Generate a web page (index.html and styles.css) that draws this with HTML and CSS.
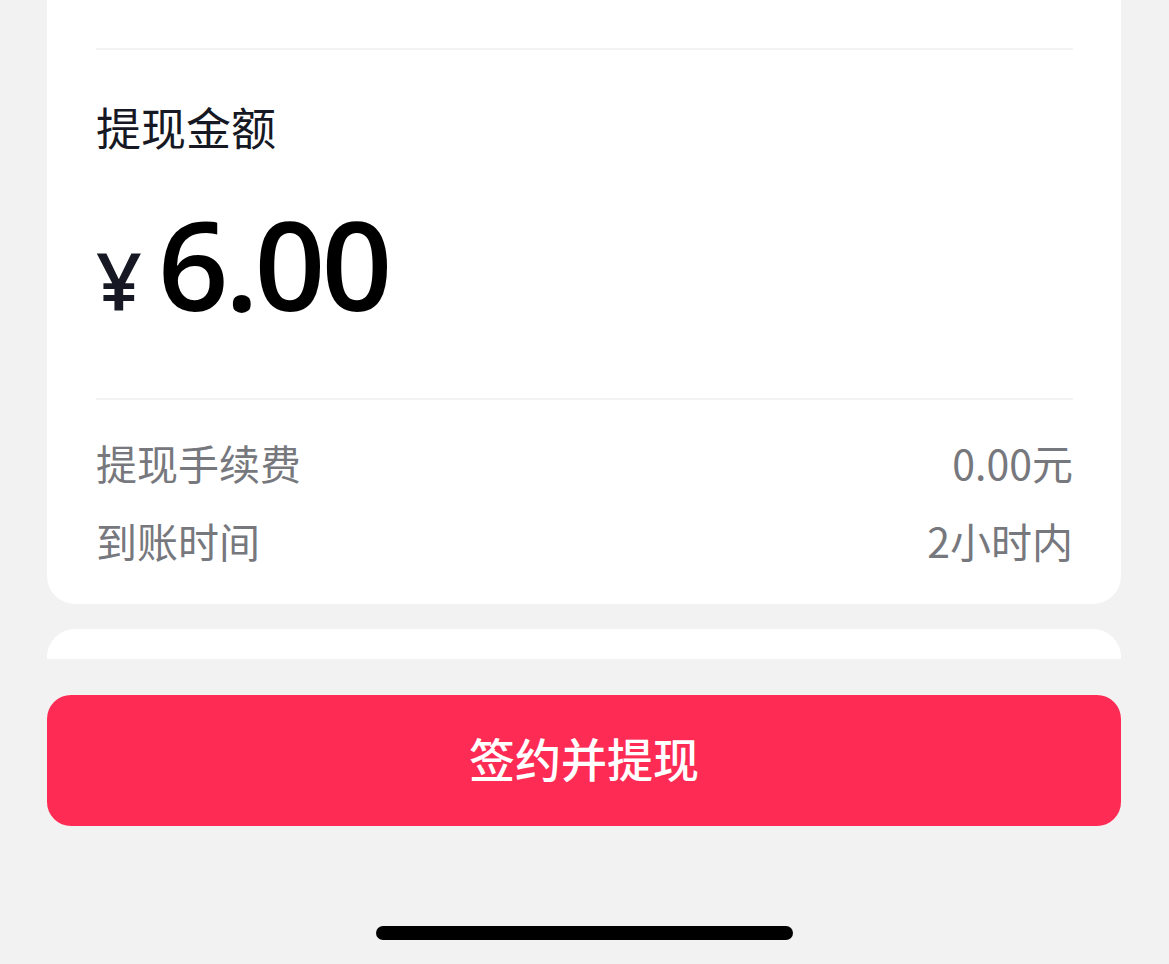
FILE: index.html
```html
<!DOCTYPE html>
<html lang="zh-CN">
<head>
<meta charset="utf-8">
<title>提现</title>
<link rel="stylesheet" href="styles.css">
</head>
<body>
<div class="page">
  <div class="scroll">
    <section class="card card-main">
      <div class="divider"></div>
      <div class="label">提现金额</div>
      <div class="amount">
        <span class="currency">¥</span><span class="value">6.00</span>
      </div>
      <div class="divider"></div>
      <div class="rows">
        <div class="row"><span>提现手续费</span><span>0.00元</span></div>
        <div class="row"><span>到账时间</span><span>2小时内</span></div>
      </div>
    </section>
    <section class="card card-next"></section>
  </div>
  <footer class="footer">
    <button class="btn" type="button">签约并提现</button>
    <div class="home-indicator"></div>
  </footer>
</div>
</body>
</html>
```

FILE: styles.css
```css
html, body {
  margin: 0;
  padding: 0;
  background: #f2f2f2;
}
body {
  font-family: "Noto Sans CJK SC", "Noto Sans", sans-serif;
  color: #161823;
}
.page {
  width: 1169px;
  height: 964px;
  display: flex;
  flex-direction: column;
  overflow: hidden;
}
.scroll {
  height: 659px;
  overflow: hidden;
  padding: 0 48px 0 47px;
  display: flex;
  flex-direction: column;
  gap: 25px;
  flex-shrink: 0;
}
.card {
  background: #ffffff;
  border-radius: 28px;
}
.card-main {
  border-radius: 0 0 28px 28px;
  padding: 48px 48px 22px 49px;
}
.divider {
  height: 2px;
  background: #f2f2f2;
}
.label {
  margin-top: 47px;
  font-size: 45px;
  line-height: 60px;
  color: #161823;
}
.amount {
  margin-top: 38px;
  margin-bottom: 67px;
  display: flex;
  align-items: baseline;
  gap: 16px;
  height: 136px;
  line-height: 136px;
}
.currency {
  font-family: "Open Sans", "Noto Sans", sans-serif;
  font-weight: 600;
  font-size: 80px;
  color: #161823;
}
.value {
  font-family: "Open Sans", "Noto Sans", sans-serif;
  font-weight: 600;
  font-size: 124px;
  letter-spacing: -4px;
  color: #000000;
}
.rows {
  padding-top: 23px;
  padding-bottom: 3px;
}
.row {
  display: flex;
  justify-content: space-between;
  font-size: 41px;
  line-height: 78px;
  color: #77787d;
}
.card-next {
  height: 80px;
  flex-shrink: 0;
}
.footer {
  flex: 1;
  padding: 36px 48px 0 47px;
  display: flex;
  flex-direction: column;
  align-items: center;
}
.btn {
  width: 100%;
  height: 131px;
  border: 0;
  border-radius: 24px;
  background: #fe2c55;
  color: #ffffff;
  font-family: "Noto Sans CJK SC", sans-serif;
  font-weight: 500;
  font-size: 46px;
  padding: 0 0 8px;
}
.home-indicator {
  margin-top: 100px;
  width: 417px;
  height: 14px;
  border-radius: 7px;
  background: #000000;
}
```
